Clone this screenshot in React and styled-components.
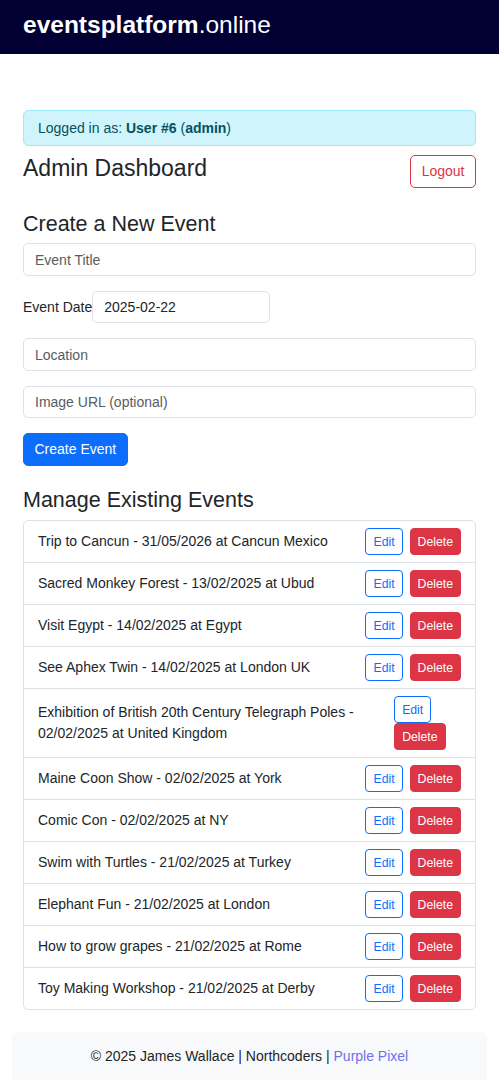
import React from 'react';
import styled, { createGlobalStyle } from 'styled-components';

const GlobalStyle = createGlobalStyle`
  body {
    margin: 0;
    font-family: "Liberation Sans", Arial, sans-serif;
    font-size: 14px;
    line-height: 1.5;
    color: #212529;
    background: #fff;
  }
  * {
    box-sizing: border-box;
  }
`;

const Header = styled.header`
  height: 54px;
  background-color: #020032;
  padding: 10px 23px 0;
`;

const Brand = styled.div`
  color: #fff;
  font-size: 24.5px;
  line-height: 1.2;
  b {
    font-weight: 700;
  }
`;

const Page = styled.div`
  padding: 0 12px;
`;

const Container = styled.main`
  padding: 56px 11px 0;
`;

const Alert = styled.div`
  background-color: #cff4fc;
  border: 1px solid #9eeaf9;
  color: #055160;
  border-radius: 5px;
  padding: 6.5px 14px;
  b {
    font-weight: 700;
  }
`;

const TitleRow = styled.div`
  display: flex;
  justify-content: space-between;
  align-items: flex-start;
  margin-top: 9px;
`;

const Heading = styled.h2`
  margin: ${p => p.$top || 0}px 0 6px;
  font-size: ${p => p.$size || 21.5}px;
  font-weight: 400;
  line-height: 1.2;
`;

const Button = styled.button`
  font-family: inherit;
  font-size: 14px;
  line-height: 21px;
  padding: 5px 10.5px;
  border-radius: 5px;
  border: 1px solid ${p => p.$color};
  background-color: ${p => (p.$outline ? '#fff' : p.$color)};
  color: ${p => (p.$outline ? p.$color : '#fff')};
  cursor: pointer;
`;

const SmallButton = styled(Button)`
  font-size: 12.25px;
  line-height: 18px;
  padding: 3.5px 7px;
  border-radius: 4px;
  margin-right: ${p => p.$gap || 0}px;
`;

const Form = styled.form`
  display: flex;
  flex-direction: column;
  align-items: flex-start;
`;

const Input = styled.input`
  display: block;
  width: ${p => p.$width || '100%'};
  height: 32.5px;
  margin-bottom: 15px;
  padding: 5px 11px;
  font-family: inherit;
  font-size: 14px;
  line-height: 21px;
  color: #212529;
  border: 1px solid #dee2e6;
  border-radius: 5px;
  background: #fff;
  &::placeholder {
    color: #595c5f;
  }
`;

const DateRow = styled.div`
  display: flex;
  align-items: flex-start;
  label {
    line-height: 21px;
    padding-top: 6px;
  }
`;

const List = styled.ul`
  list-style: none;
  margin: 0;
  padding: 0;
  border: 1px solid #dee2e6;
  border-radius: 5px;
`;

const Item = styled.li`
  display: flex;
  justify-content: space-between;
  align-items: center;
  padding: 7px 14px;
  & + & {
    border-top: 1px solid #dee2e6;
  }
`;

const Actions = styled.div`
  display: flex;
  flex-wrap: wrap;
`;

const Footer = styled.footer`
  margin-top: 22px;
  background-color: #f8f9fa;
  border-radius: 6px 6px 0 0;
  padding: 14px;
  text-align: center;
  a {
    color: #7070ee;
    text-decoration: none;
  }
`;

const events = [
  'Trip to Cancun - 31/05/2026 at Cancun Mexico',
  'Sacred Monkey Forest - 13/02/2025 at Ubud',
  'Visit Egypt - 14/02/2025 at Egypt',
  'See Aphex Twin - 14/02/2025 at London UK',
  'Exhibition of British 20th Century Telegraph Poles - 02/02/2025 at United Kingdom',
  'Maine Coon Show - 02/02/2025 at York',
  'Comic Con - 02/02/2025 at NY',
  'Swim with Turtles - 21/02/2025 at Turkey',
  'Elephant Fun - 21/02/2025 at London',
  'How to grow grapes - 21/02/2025 at Rome',
  'Toy Making Workshop - 21/02/2025 at Derby'
];

export default function App() {
  return (
    <>
      <GlobalStyle />
      <Header>
        <Brand>
          <b>eventsplatform</b>.online
        </Brand>
      </Header>
      <Page>
        <Container>
          <Alert>
            Logged in as: <b>User #6</b> (<b>admin</b>)
          </Alert>
          <TitleRow>
            <Heading as="h3" $size={23}>Admin Dashboard</Heading>
            <Button $outline $color="#dc3545">Logout</Button>
          </TitleRow>

          <Heading $top={23}>Create a New Event</Heading>
          <Form onSubmit={e => e.preventDefault()}>
            <Input placeholder="Event Title" />
            <DateRow>
              <label>Event Date</label>
              <Input $width="178px" defaultValue="2025-02-22" />
            </DateRow>
            <Input placeholder="Location" />
            <Input placeholder="Image URL (optional)" />
            <Button $color="#0d6efd" type="submit">Create Event</Button>
          </Form>

          <Heading $top={22}>Manage Existing Events</Heading>
          <List>
            {events.map((ev, i) => (
              <Item key={i}>
                <span>{ev}</span>
                <Actions>
                  <SmallButton $outline $color="#0d6efd" $gap={7}>Edit</SmallButton>
                  <SmallButton $color="#dc3545">Delete</SmallButton>
                </Actions>
              </Item>
            ))}
          </List>
        </Container>
        <Footer>
          © 2025 James Wallace | Northcoders | <a href="#">Purple Pixel</a>
        </Footer>
      </Page>
    </>
  );
}
